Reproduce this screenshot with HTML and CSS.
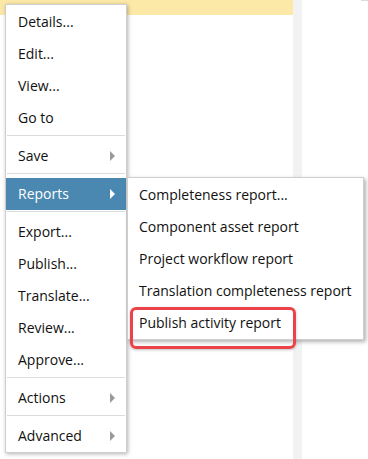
FILE: index.html
```html
<!DOCTYPE html>
<html>
<head>
<meta charset="utf-8">
<link rel="stylesheet" href="styles.css">
</head>
<body>
<div class="page">
  <div class="col-main"><div class="banner"></div></div>
  <div class="col-gutter"></div>
  <div class="col-side"><div class="side-mark"></div></div>

  <ul class="menu">
    <li class="item">Details...</li>
    <li class="item">Edit...</li>
    <li class="item">View...</li>
    <li class="item">Go to</li>
    <li class="sep"></li>
    <li class="item has-sub">Save<span class="arrow"></span></li>
    <li class="sep"></li>
    <li class="item has-sub active">Reports<span class="arrow"></span></li>
    <li class="sep"></li>
    <li class="item">Export...</li>
    <li class="item">Publish...</li>
    <li class="item">Translate...</li>
    <li class="item">Review...</li>
    <li class="item">Approve...</li>
    <li class="sep"></li>
    <li class="item has-sub">Actions<span class="arrow"></span></li>
    <li class="sep"></li>
    <li class="item has-sub">Advanced<span class="arrow"></span></li>
  </ul>

  <ul class="submenu">
    <li class="item">Completeness report...</li>
    <li class="item">Component asset report</li>
    <li class="item">Project workflow report</li>
    <li class="item">Translation completeness report</li>
    <li class="item">Publish activity report</li>
  </ul>

  <div class="callout"></div>
</div>
</body>
</html>
```
FILE: styles.css
```css
* { box-sizing: border-box; }
html, body { margin: 0; padding: 0; background: #fff; }
body {
  font-family: "Open Sans", "Noto Sans", sans-serif;
  font-size: 14px;
  color: #111;
}
.page {
  position: relative;
  width: 368px;
  height: 459px;
  display: grid;
  grid-template-columns: 293px 9px 1fr;
  overflow: hidden;
}
.col-main { background: #fff; }
.banner { height: 15px; background: #fde9a7; }
.col-gutter { background: #f2f2f2; }
.col-side { display: flex; justify-content: flex-end; }
.side-mark { width: 7px; height: 1px; background: #dcdcdc; }

ul { list-style: none; margin: 0; }

.menu {
  position: absolute;
  left: 5px;
  top: 4px;
  width: 122px;
  padding: 1px 0 0;
  background: #fff;
  border: 1px solid #cfcfcf;
  box-shadow: 1px 1px 4px rgba(0, 0, 0, 0.3);
}
.item {
  height: 32px;
  line-height: 32px;
  padding-left: 12px;
  white-space: nowrap;
  letter-spacing: 0;
}
.has-sub { display: flex; align-items: center; justify-content: space-between; padding-right: 11px; }
.arrow {
  width: 0; height: 0;
  border-left: 5px solid #9a9a9a;
  border-top: 5px solid transparent;
  border-bottom: 5px solid transparent;
}
.active { background: #4a88b2; color: #fff; }
.active .arrow { border-left-color: #fff; }
.sep {
  height: 1px;
  margin: 1px 1px 4px;
  background: #dcdcdc;
}

.submenu {
  position: absolute;
  left: 127px;
  top: 177px;
  width: 237px;
  padding: 1px 0 0;
  background: #fff;
  border: 1px solid #cfcfcf;
  box-shadow: 2px 2px 4px rgba(0, 0, 0, 0.3);
}
.submenu .item { padding-left: 11px; }

.callout {
  position: absolute;
  left: 130px;
  top: 307px;
  width: 166px;
  height: 42px;
  border: 3px solid #ec434b;
  border-radius: 6px;
  box-shadow: 0 1px 3px rgba(0, 0, 0, 0.25);
}
```
